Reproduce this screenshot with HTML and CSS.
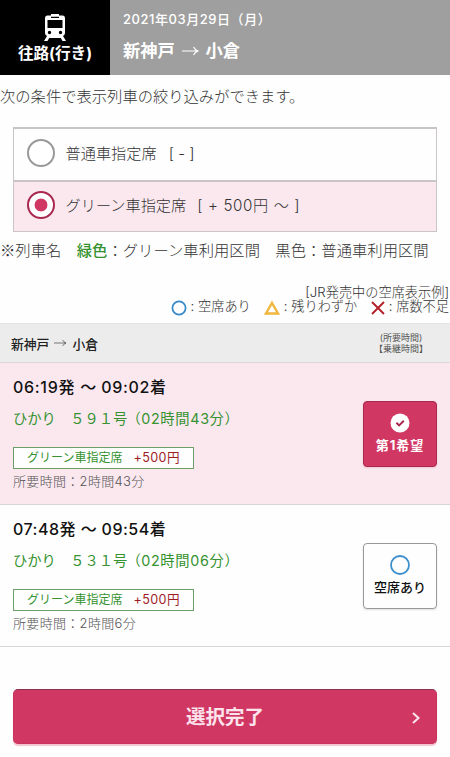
FILE: index.html
```html
<!DOCTYPE html>
<html lang="ja">
<head>
<meta charset="utf-8">
<meta name="viewport" content="width=device-width, initial-scale=1">
<title>列車選択</title>
<link rel="stylesheet" href="styles.css">
</head>
<body>
<header class="trip">
  <div class="direction">
    <svg class="train" width="24" height="28" viewBox="0 0 24 28" fill="#fff"><path fill-rule="evenodd" d="M8 0h8v1.500h3.500q2.500 0 2.500 3v14.500q0 2-2 3l3 5h-3.500l-1.700-3H6.200l-1.700 3H1l3-5q-2-1-2-3V4.500q0-3 2.500-3H8zM4.500 6v8h15V6zM8 2.800v1.200h8V2.800zM6.500 16.800a1.700 1.700 0 1 0 0 3.400a1.700 1.700 0 0 0 0-3.400zM17.500 16.800a1.700 1.700 0 1 0 0 3.400a1.700 1.700 0 0 0 0-3.400z"/></svg>
    <span class="direction-name">往路(行き)</span>
  </div>
  <div class="trip-info">
    <div class="date">2021年03月29日（月）</div>
    <div class="route">新神戸 <span class="arrow"><svg width="17" height="10" viewBox="0 0 17 10" fill="none" stroke="#fff" stroke-width="1.200"><path d="M0 5h16M11.500 1q1.500 3 4.500 4q-3 1-4.500 4"/></svg></span> 小倉</div>
  </div>
</header>
<main>
  <p class="lead">次の条件で表示列車の絞り込みができます。</p>
  <div class="filters">
    <label class="option"><span class="radio"></span><span class="option-name">普通車指定席</span><span class="price basic">[ - ]</span></label>
    <label class="option selected"><span class="radio"></span><span class="option-name">グリーン車指定席</span><span class="price">[ + 500円 〜 ]</span></label>
  </div>
  <p class="note">※列車名　<b>緑色</b>：グリーン車利用区間　黒色：普通車利用区間</p>
  <div class="legend">
    <div class="legend-title">[JR発売中の空席表示例]</div>
    <div class="legend-items">
      <span class="item"><svg width="16" height="16" viewBox="0 0 16 16" fill="none" stroke="#3388c8" stroke-width="1.700"><circle cx="8" cy="8" r="6.600"/></svg><span class="colon">:</span>空席あり</span>
      <span class="item few"><svg width="16" height="16" viewBox="0 0 16 16" fill="none" stroke="#efb73e" stroke-width="2.400"><path d="M8 3L14 13.500H2z"/></svg><span class="colon">:</span>残りわずか</span>
      <span class="item none"><svg width="14" height="16" viewBox="0 0 14 16" fill="none" stroke="#b4202a" stroke-width="1.900"><path d="M1 2l12 12M13 2L1 14"/></svg><span class="colon">:</span>席数不足</span>
    </div>
  </div>
  <div class="section-head">
    <div class="section-route">新神戸 <span class="arrow"><svg width="13" height="8" viewBox="0 0 13 8" fill="none" stroke="#555" stroke-width=".8"><path d="M0 4h12M8.500 1q1 2 3.500 3q-2.500 1-3.500 3"/></svg></span> 小倉</div>
    <div class="time-key">(所要時間)<br>【乗継時間】</div>
  </div>
  <section class="service chosen">
    <div class="details">
      <div class="times">06:19発 <span class="cjk">〜</span> 09:02着</div>
      <div class="name">ひかり　５９１号<span class="duration">（02時間43分）</span></div>
      <div class="seat"><span>グリーン車指定席</span><span class="fee">+500円</span></div>
      <div class="required">所要時間：2時間43分</div>
    </div>
    <button class="pick"><svg width="20" height="20" viewBox="0 0 20 20"><circle cx="10" cy="10" r="9.500" fill="#fff"/><path d="M6.400 9.700l2.700 2.700 4.700-4.700" fill="none" stroke="#a92850" stroke-width="2"/></svg><span>第1希望</span></button>
  </section>
  <section class="service">
    <div class="details">
      <div class="times">07:48発 <span class="cjk">〜</span> 09:54着</div>
      <div class="name">ひかり　５３１号<span class="duration">（02時間06分）</span></div>
      <div class="seat"><span>グリーン車指定席</span><span class="fee">+500円</span></div>
      <div class="required">所要時間：2時間6分</div>
    </div>
    <button class="pick"><svg width="20" height="20" viewBox="0 0 20 20"><circle cx="10" cy="10" r="9" fill="none" stroke="#3d8fcc" stroke-width="1.800"/></svg><span>空席あり</span></button>
  </section>
  <button class="submit"><span>選択完了</span><svg class="chevron" width="8" height="12" viewBox="0 0 8 12" fill="none" stroke="#fbe4ec" stroke-width="2"><path d="M1 1l5.500 5L1 11"/></svg></button>
</main>
</body>
</html>
```

FILE: styles.css
```css
* { box-sizing: border-box; }
body { margin: 0; width: 450px; height: 757px; overflow: hidden; background: #fefefe; color: #333; font-family: Inter, "Noto Sans CJK JP", sans-serif; font-weight: 300; }
p { margin: 0; }
svg { display: block; flex: none; }
div, p, span { white-space: nowrap; }
button { font-family: inherit; margin: 0; padding: 0; }
.cjk { font-family: "Noto Sans CJK JP", sans-serif; }
.trip { display: flex; height: 75px; background: #9f9f9f; color: #fff; font-weight: 700; }
.direction { width: 110px; background: #000; display: flex; flex-direction: column; align-items: center; padding-top: 14px; }
.direction-name { font-size: 15.600px; line-height: 23px; }
.trip-info { padding: 9px 0 0 13px; }
.date { font-size: 13px; line-height: 20px; font-weight: 500; letter-spacing: .55px; }
.route { font-size: 17.200px; line-height: 26px; margin-top: 9px; display: flex; align-items: center; }
.arrow { margin: 0 7px; }
.lead { font-size: 15.300px; line-height: 24px; padding-top: 8px; height: 52px; font-family: "Noto Sans CJK JP", sans-serif; }
.filters { margin: 0 13px; border: 1px solid #c9c4c8; border-top-width: 2px; height: 105px; }
.option { display: flex; align-items: center; height: 51px; padding: 0 0 4px 13px; font-size: 15.200px; line-height: 24px; }
.option.selected { background: #fbe8ef; border-top: 2px solid #c9c4c8; }
.radio { width: 28px; height: 28px; border: 2px solid #999; border-radius: 50%; background: #fff; }
.option-name { margin-left: 10.500px; padding-top: 2px; }
.selected .radio { border-color: #a92850; background: radial-gradient(circle, #d13763 0 6px, #fff 6.800px); }
.price { margin-left: 11px; padding-top: 2px; letter-spacing: .6px; }
.price.basic { letter-spacing: 0; margin-left: 12px; }
.note { font-size: 15.300px; line-height: 24px; padding: 5px 0 0; height: 53px; font-family: "Noto Sans CJK JP", sans-serif; letter-spacing: .04px; }
.note b { color: #35922f; font-weight: 500; }
.legend { height: 38px; font-size: 13.200px; padding-right: 1px; }
.legend-title { text-align: right; line-height: 14px; }
.legend-items { display: flex; justify-content: flex-end; line-height: 14px; }
.item { display: flex; }
.item svg { margin-top: 1px; }
.colon { width: 11.500px; text-align: center; }
.few { margin-left: 13px; }
.none { margin-left: 13.500px; }
.section-head { display: flex; justify-content: space-between; align-items: center; height: 40px; background: #ececec; border-top: 1px solid #e2e2e2; border-bottom: 1px solid #ddd5d8; padding: 0 22px 0 11px; }
.section-route { display: flex; align-items: center; font-size: 12.800px; font-weight: 500; color: #222; }
.section-route .arrow { margin: 0 5px; }
.time-key { font-size: 9px; line-height: 11px; text-align: center; font-weight: 400; color: #555; }
.service { display: flex; justify-content: space-between; align-items: center; height: 142px; border-bottom: 1px solid #d9d5d7; padding: 0 13px; }
.chosen { background: #fbe8ef; }
.details { height: 142px; padding-top: 12px; }
.times { color: #111; font-size: 16px; line-height: 24px; font-weight: 500; letter-spacing: .5px; }
.chosen .times { letter-spacing: .7px; }
.times .cjk { letter-spacing: 0; line-height: 1; }
.name { display: flex; color: #35922f; font-size: 14.300px; line-height: 22px; margin-top: 9px; font-weight: 400; }
.duration { margin-left: -1px; letter-spacing: .65px; }
.seat { display: flex; width: 181px; height: 22px; line-height: 20px; margin-top: 17px; padding-left: 13px; border: 1px solid #6d9e69; background: #fefefe; color: #35922f; font-size: 12px; font-weight: 400; }
.fee { color: #9e1c24; margin-left: 11px; font-size: 12.600px; letter-spacing: .4px; font-weight: 400; }
.required { font-size: 13px; line-height: 20px; margin-top: 2px; color: #555; letter-spacing: .32px; }
.pick { display: flex; flex-direction: column; align-items: center; width: 74px; height: 66px; padding-top: 11px; border: 1px solid #999; border-radius: 4px; background: #fefefe; color: #111; font-size: 13px; line-height: 20px; font-weight: 500; box-shadow: 0 1px 2px #ddd; }
.pick span { margin-top: 2px; }
.chosen .pick { background: #d13763; border-color: #a92850; color: #fff; font-weight: 700; letter-spacing: 1px; box-shadow: 0 1px 2px #edc4d1; }
.submit { display: flex; align-items: center; justify-content: center; position: relative; width: 424px; height: 55px; margin: 42px 13px 0; padding-bottom: 2px; border: 1px solid #c9345d; border-top-color: #8d304f; border-radius: 5px; background: #d13763; color: #fbe4ec; font-size: 19.500px; font-weight: 700; box-shadow: 0 2px 1px #f2c4d0; }
.chevron { position: absolute; right: 16px; top: 22px; }
```
